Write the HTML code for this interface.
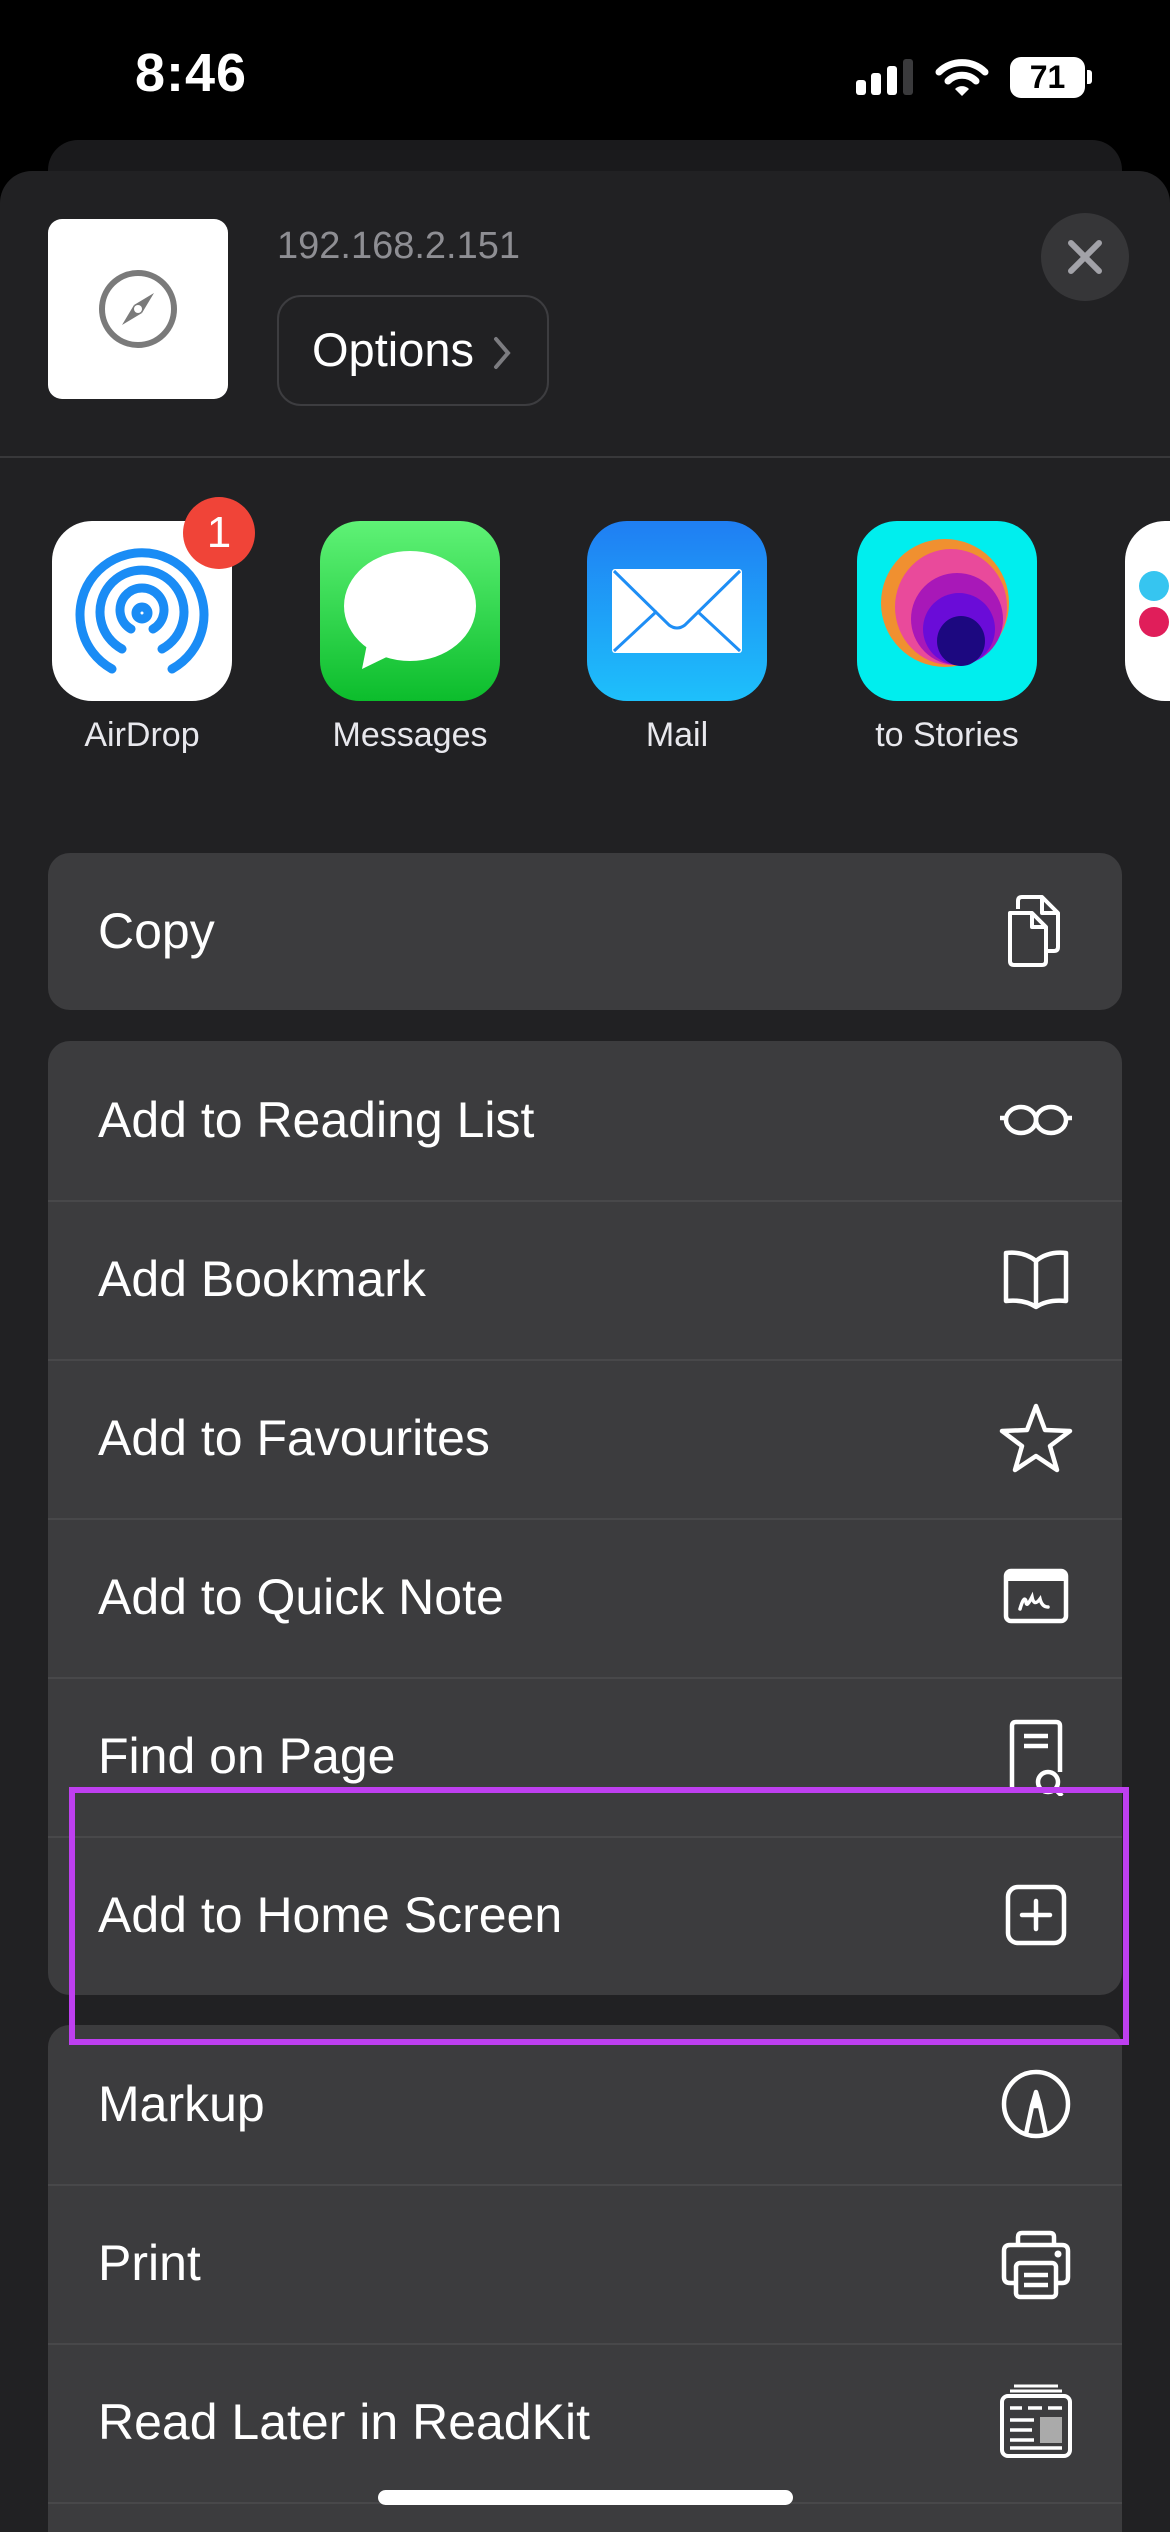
<!DOCTYPE html>
<html style="width:1170px;height:2532px;overflow:hidden"><head><meta charset="utf-8">
<style>
*{margin:0;padding:0;box-sizing:border-box}
body{width:1170px;height:2532px;background:#000;position:relative;overflow:hidden;font-family:"Liberation Sans",sans-serif;color:#fff}
.abs{position:absolute}
.card{position:absolute;left:48px;width:1074px;background:#3c3c3e;border-radius:22px;overflow:hidden}
.row{position:absolute;left:0;width:1074px;height:159px}
.row .t{position:absolute;left:50px;top:0;line-height:159px;font-size:50px;color:#fff}
.sep{position:absolute;left:0;width:1074px;height:2px;background:#48484a}
.row svg{position:absolute;left:948px;top:39px;width:80px;height:80px}
.lbl{position:absolute;top:716px;width:260px;text-align:center;font-size:34px;color:#e8e8ed}
.app{position:absolute;top:521px;width:180px;height:180px;border-radius:40px;overflow:hidden}
</style></head><body>
<div class="abs" style="left:135px;top:42px;font-size:54px;font-weight:bold;letter-spacing:1px">8:46</div>
<div class="abs" style="left:856px;top:80px;width:10px;height:15px;background:#fff;border-radius:3px"></div>
<div class="abs" style="left:871px;top:73px;width:10px;height:22px;background:#fff;border-radius:3px"></div>
<div class="abs" style="left:887px;top:66px;width:10px;height:29px;background:#fff;border-radius:3px"></div>
<div class="abs" style="left:903px;top:59px;width:10px;height:36px;background:#3a3a3c;border-radius:3px"></div>
<svg class="abs" style="left:935px;top:58px" width="54" height="40" viewBox="0 0 54 40"><path d="M4 14 A33 33 0 0 1 50 14" stroke="#fff" stroke-width="7" fill="none" stroke-linecap="round"/><path d="M13 23 A20 20 0 0 1 41 23" stroke="#fff" stroke-width="7" fill="none" stroke-linecap="round"/><path d="M20 31 L27 38 L34 31 A10 10 0 0 0 20 31Z" fill="#fff"/></svg>
<div class="abs" style="left:1010px;top:57px;width:75px;height:41px;background:#fff;border-radius:11px;color:#000;font-weight:bold;font-size:32px;text-align:center;line-height:41px">71</div>
<div class="abs" style="left:1087px;top:70px;width:5px;height:14px;background:#fff;border-radius:0 3px 3px 0"></div>

<div class="abs" style="left:48px;top:140px;width:1074px;height:100px;background:#1a1a1c;border-radius:30px"></div>
<div class="abs" style="left:0;top:171px;width:1170px;height:2361px;background:#212123;border-radius:32px 32px 0 0"></div>

<div class="abs" style="left:48px;top:219px;width:180px;height:180px;background:#fff;border-radius:14px"></div>
<svg class="abs" style="left:96px;top:267px" width="84" height="84" viewBox="0 0 84 84"><circle cx="42" cy="42" r="36" stroke="#7a7a7a" stroke-width="6" fill="none"/><path d="M58 26 L46 46 L38 38Z" fill="#7a7a7a"/><path d="M26 58 L38 38 L46 46Z" fill="#7a7a7a"/><circle cx="42" cy="42" r="4" fill="#fff"/></svg>
<div class="abs" style="left:277px;top:225px;font-size:38px;color:#8e8e93">192.168.2.151</div>
<div class="abs" style="left:277px;top:295px;width:272px;height:111px;border:2px solid #3d3d40;border-radius:24px"></div>
<div class="abs" style="left:312px;top:322px;font-size:47px;color:#fff">Options</div>
<svg class="abs" style="left:490px;top:335px" width="24" height="36" viewBox="0 0 24 36"><path d="M6 4 L18 18 L6 32" stroke="#7c7c80" stroke-width="4" fill="none" stroke-linecap="round"/></svg>
<div class="abs" style="left:1041px;top:213px;width:88px;height:88px;border-radius:50%;background:#363638"></div>
<svg class="abs" style="left:1065px;top:237px" width="40" height="40" viewBox="0 0 40 40"><path d="M6 6 L34 34 M34 6 L6 34" stroke="#a2a2a8" stroke-width="6" stroke-linecap="round"/></svg>
<div class="abs" style="left:0;top:456px;width:1170px;height:2px;background:#38383a"></div>

<div class="app" style="left:52px;background:#fff">
<svg width="180" height="180" viewBox="0 0 180 180"><g stroke="#1a8cf5" stroke-width="9" fill="none" stroke-linecap="round"><path d="M60 148 A62 62 0 1 1 120 148"/><path d="M70 128 A42 42 0 1 1 110 128"/><path d="M79 108 A22 22 0 1 1 101 108"/><circle cx="90" cy="92" r="6"/></g></svg></div>
<div class="abs" style="left:183px;top:497px;width:72px;height:72px;border-radius:50%;background:#f04438;color:#fff;font-size:44px;text-align:center;line-height:72px">1</div>
<div class="app" style="left:320px;background:linear-gradient(#5ff276,#0cbd2c)">
<svg width="180" height="180" viewBox="0 0 180 180"><ellipse cx="90" cy="85" rx="66" ry="55" fill="#fff"/><path d="M48 118 L42 148 L75 132Z" fill="#fff"/></svg></div>
<div class="app" style="left:587px;background:linear-gradient(#1f7ef3,#1ec0fb)">
<svg width="180" height="180" viewBox="0 0 180 180"><rect x="25" y="48" width="130" height="84" rx="3" fill="#fff"/><path d="M27 50 L82 104 Q90 110 98 104 L153 50 M27 130 L70 90 M153 130 L110 90" stroke="#1e8ef5" stroke-width="3" fill="none"/></svg></div>
<div class="app" style="left:857px;background:#00eeee">
<svg width="180" height="180" viewBox="0 0 180 180"><ellipse cx="88" cy="82" rx="64" ry="64" fill="#f09030"/><ellipse cx="94" cy="86" rx="56" ry="58" fill="#e94a9b"/><ellipse cx="100" cy="98" rx="46" ry="46" fill="#a818b8"/><ellipse cx="102" cy="108" rx="36" ry="36" fill="#6a0cd8"/><ellipse cx="104" cy="120" rx="24" ry="25" fill="#1c0880"/></svg></div>
<div class="app" style="left:1125px;background:#fff">
<div class="abs" style="left:14px;top:50px;width:30px;height:30px;border-radius:50%;background:#36c5f0"></div>
<div class="abs" style="left:14px;top:86px;width:30px;height:30px;border-radius:50%;background:#e01e5a"></div></div>
<div class="lbl" style="left:12px">AirDrop</div>
<div class="lbl" style="left:280px">Messages</div>
<div class="lbl" style="left:547px">Mail</div>
<div class="lbl" style="left:817px">to Stories</div>

<div class="card" style="top:853px;height:157px">
<div class="row" style="height:157px"><div class="t" style="line-height:157px">Copy</div>
<svg style="top:38px" viewBox="0 0 80 80"><g stroke="#fff" stroke-width="4" fill="none" stroke-linejoin="round"><path d="M22 18 V10 Q22 6 26 6 H46 L62 22 V56 Q62 60 58 60 H50"/><path d="M46 6 V22 H62"/><path d="M14 22 H36 L50 36 V70 Q50 74 46 74 H18 Q14 74 14 70 Z"/><path d="M36 22 V36 H50"/></g></svg></div>
</div>

<div class="card" style="top:1041px;height:954px">
<div class="row" style="top:0"><div class="t">Add to Reading List</div>
<svg viewBox="0 0 80 80" style="left:938px;width:100px"><g stroke="#fff" stroke-width="4.5" fill="none"><ellipse cx="25" cy="40" rx="15" ry="13"/><ellipse cx="55" cy="40" rx="15" ry="13"/><path d="M38 38 H42 M4 38 H10 M70 38 H76"/></g></svg></div>
<div class="sep" style="top:159px"></div>
<div class="row" style="top:159px"><div class="t">Add Bookmark</div>
<svg viewBox="0 0 80 80"><g stroke="#fff" stroke-width="4.5" fill="none" stroke-linejoin="round"><path d="M40 22 Q28 12 10 14 V62 Q28 60 40 68 Q52 60 70 62 V14 Q52 12 40 22 Z M40 22 V68"/></g></svg></div>
<div class="sep" style="top:318px"></div>
<div class="row" style="top:318px"><div class="t">Add to Favourites</div>
<svg viewBox="0 0 80 80"><path d="M40 8 L49 32 L74 33 L54 48 L61 72 L40 58 L19 72 L26 48 L6 33 L31 32 Z" stroke="#fff" stroke-width="4.5" fill="none" stroke-linejoin="round"/></svg></div>
<div class="sep" style="top:477px"></div>
<div class="row" style="top:477px"><div class="t">Add to Quick Note</div>
<svg viewBox="0 0 80 80"><rect x="10" y="14" width="60" height="50" rx="5" stroke="#fff" stroke-width="4.5" fill="none"/><rect x="10" y="14" width="60" height="10" fill="#fff"/><path d="M24 52 Q28 38 30 44 Q30 52 36 40 Q38 50 44 42 Q46 50 52 50" stroke="#fff" stroke-width="3.5" fill="none" stroke-linecap="round"/></svg></div>
<div class="sep" style="top:636px"></div>
<div class="row" style="top:636px"><div class="t">Find on Page</div>
<svg viewBox="0 0 80 80"><g stroke="#fff" stroke-width="4.5" fill="none"><path d="M36 74 H20 Q16 74 16 70 V10 Q16 6 20 6 H60 Q64 6 64 10 V56"/><path d="M28 20 H52 M28 30 H52"/><circle cx="52" cy="66" r="10"/><path d="M59 73 L66 80"/></g></svg></div>
<div class="sep" style="top:795px"></div>
<div class="row" style="top:795px"><div class="t">Add to Home Screen</div>
<svg viewBox="0 0 80 80"><g stroke="#fff" stroke-width="4.5" fill="none" stroke-linecap="round"><rect x="12" y="12" width="56" height="56" rx="10"/><path d="M40 26 V54 M26 40 H54"/></g></svg></div>
</div>

<div class="card" style="top:2025px;height:507px;border-radius:22px 22px 0 0">
<div class="row" style="top:0"><div class="t">Markup</div>
<svg viewBox="0 0 80 80"><g stroke="#fff" stroke-width="4.5" fill="none" stroke-linejoin="round"><circle cx="40" cy="40" r="32"/><path d="M30 70 L36 42 L40 28 L44 42 L50 70 M36 42 H44"/></g><path d="M40 26 L44 42 H36Z" fill="#fff"/></svg></div>
<div class="sep" style="top:159px"></div>
<div class="row" style="top:159px"><div class="t">Print</div>
<svg viewBox="0 0 80 80"><g stroke="#fff" stroke-width="4.5" fill="none" stroke-linejoin="round"><path d="M22 22 V14 Q22 10 26 10 H54 Q58 10 58 14 V22"/><path d="M20 60 H14 Q8 60 8 54 V28 Q8 22 14 22 H66 Q72 22 72 28 V54 Q72 60 66 60 H60"/><rect x="20" y="40" width="40" height="34" rx="4"/><path d="M28 52 H52 M28 62 H52"/></g><circle cx="62" cy="31" r="3.5" fill="#fff"/></svg></div>
<div class="sep" style="top:318px"></div>
<div class="row" style="top:318px"><div class="t">Read Later in ReadKit</div>
<svg viewBox="0 0 80 80"><g stroke="#fff" fill="none"><path d="M18 4 H62 M14 9 H66" stroke-width="3"/><rect x="6" y="14" width="68" height="60" rx="6" stroke-width="4"/><path d="M14 26 H26 M32 26 H46 M52 26 H66 M14 38 H38 M14 48 H36 M14 58 H38 M14 66 H66" stroke-width="3.5"/></g><rect x="44" y="35" width="22" height="26" fill="#aaa"/></svg></div>
<div class="sep" style="top:477px"></div>
</div>

<div class="abs" style="left:69px;top:1787px;width:1060px;height:258px;border:6px solid #be3ff0"></div>
<div class="abs" style="left:378px;top:2490px;width:415px;height:15px;background:#fff;border-radius:8px"></div>
</body></html>
